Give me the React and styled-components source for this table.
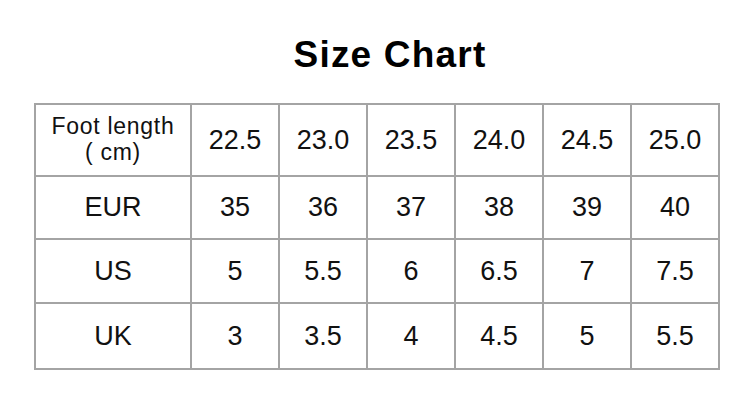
import styled, { createGlobalStyle } from 'styled-components';

const GlobalStyle = createGlobalStyle`
  html, body {
    margin: 0;
    padding: 0;
    background: #fff;
  }
  body {
    font-family: "Liberation Sans", Arial, sans-serif;
    color: #111;
  }
`;

const rows = [
  { label: 'EUR', values: ['35', '36', '37', '38', '39', '40'], height: 63 },
  { label: 'US', values: ['5', '5.5', '6', '6.5', '7', '7.5'], height: 64 },
  { label: 'UK', values: ['3', '3.5', '4', '4.5', '5', '5.5'], height: 66 },
];

const lengths = ['22.5', '23.0', '23.5', '24.0', '24.5', '25.0'];

const App = () => {
  return (
    <Page>
      <GlobalStyle />
      <Title>Size Chart</Title>
      <Table>
        <colgroup>
          <col style={{ width: 156 }} />
          {lengths.map((l) => (
            <col key={l} />
          ))}
        </colgroup>
        <tbody>
          <Row $height={72}>
            <HeadCell>
              <Line>Foot length</Line>
              <Line>( cm)</Line>
            </HeadCell>
            {lengths.map((l) => (
              <Cell key={l}>{l}</Cell>
            ))}
          </Row>
          {rows.map((row) => (
            <Row key={row.label} $height={row.height}>
              <Cell>{row.label}</Cell>
              {row.values.map((v, i) => (
                <Cell key={i}>{v}</Cell>
              ))}
            </Row>
          ))}
        </tbody>
      </Table>
    </Page>
  );
};

const Page = styled.div`
  width: 750px;
  height: 413px;
  padding-top: 36px;
  box-sizing: border-box;
`;

const Title = styled.h1`
  margin: 0 0 30px;
  padding-left: 30px;
  font-size: 37px;
  line-height: 37px;
  font-weight: 700;
  letter-spacing: 1.2px;
  text-align: center;
  color: #000;
`;

const Table = styled.table`
  margin-left: 34px;
  width: 686px;
  border-collapse: collapse;
  table-layout: fixed;
  border: 2px solid #a4a4a4;
`;

const Row = styled.tr`
  height: ${(p) => p.$height}px;
`;

const Cell = styled.td`
  border: 2px solid #a4a4a4;
  padding: 0;
  text-align: center;
  vertical-align: middle;
  font-size: 27px;
  color: #111;
`;

const HeadCell = styled(Cell)`
  font-size: 23px;
  letter-spacing: 0.7px;
  padding-bottom: 3px;
`;

const Line = styled.div`
  line-height: 26px;
  white-space: nowrap;
`;

export default App;
